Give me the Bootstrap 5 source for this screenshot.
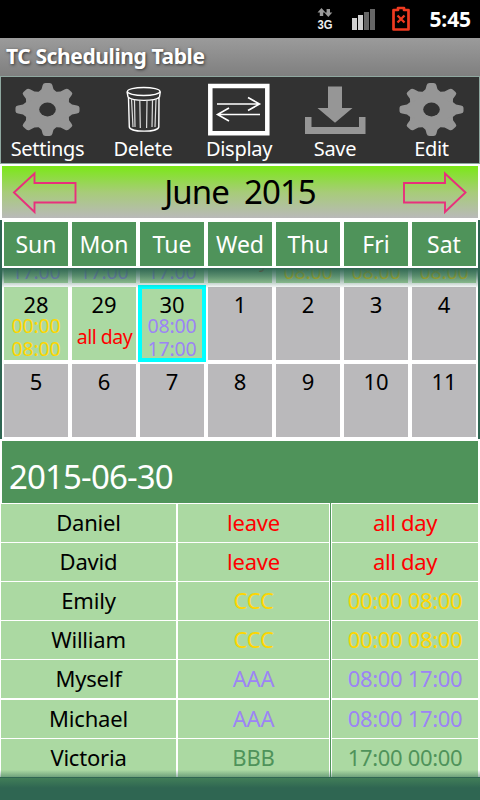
<!DOCTYPE html>
<html lang="en">
<head>
<meta charset="utf-8">
<meta name="viewport" content="width=device-width, initial-scale=1">
<title>TC Scheduling Table</title>
<link href="https://cdn.jsdelivr.net/npm/bootstrap@5.3.0/dist/css/bootstrap.min.css" rel="stylesheet">
<style>
body{width:480px;height:800px;overflow:hidden;background:#2f6652;font-family:"Noto Sans","Open Sans",sans-serif;color:#000}
svg{display:block}
.status{height:38px;background:#000}
.clock{font-size:21px;line-height:38px;font-weight:700;letter-spacing:-.1px;padding-right:9px;width:51px;text-align:right;white-space:nowrap}
.titlebar{height:38px;background:linear-gradient(#9b9b9b,#7f7f7f);font-size:21px;line-height:37px;letter-spacing:-.4px;padding-left:6px;text-shadow:1px 1px 3px #333}
.tools{height:88px;background:#323232;border:1px solid #8fa8a0;display:grid;grid-template-columns:93px 98px 94px 98px 95px}
.tool{font-size:20px;letter-spacing:-.3px;line-height:22px;padding-top:1px}
.month{height:54px;background:#fff;padding:2px 2px 0}
.month-fill{height:52px;background:linear-gradient(#7be817,#a7cc78 50%,#b9b9b9);padding:0 10px}
.month-name{font-size:33px;letter-spacing:-.95px;line-height:52px;white-space:pre}
.cal-top{background:#fff;height:2px}
.cal{margin:0 2px;background:#fff;padding:2px}
.week{display:grid;grid-template-columns:repeat(7,64px);gap:4px}
.dow{height:44px;background:#4f935a;color:#fff;font-size:23px;line-height:45px;text-align:center}
.weeks{height:171px;margin:0 2px;overflow:hidden;background:#fff;padding:0 2px;position:relative}
.weeks .week{margin-bottom:4px}
.shade{position:absolute;left:0;right:0;top:0;height:21px;background:linear-gradient(#2f6652,rgba(47,102,82,.66) 38%,rgba(47,102,82,.28) 72%,rgba(47,102,82,0) 95%)}
.day{height:73px;background:#bab9bb;text-align:center;padding-top:7px;font-size:19.5px;line-height:23px;letter-spacing:-.2px;white-space:nowrap}
.peek{height:15px;padding-top:0;overflow:hidden}
.peek>div{margin-top:-8px}
.peek>.peek-high{margin-top:-20px}
.num{font-size:22px;line-height:20px;letter-spacing:0}
.on{background:#abd9a2}
.whole{line-height:46px;letter-spacing:-.5px;padding-left:1px}
.chosen{outline:4px solid #0ff;outline-offset:-2px;position:relative}
.t-gold{color:#ffd600}.t-red{color:#f00}.t-vio{color:#9c84f5}.t-grn{color:#4f935a}
.date-wrap{background:#fff;padding:2px 2px 0}
.date{height:62px;background:#4f935a;color:#fff;font-size:33px;letter-spacing:-.85px;line-height:72px;padding-left:7px;overflow:hidden}
.roster{background:#fff;padding:1px 2px 0 1px;position:relative}
.entry{display:grid;grid-template-columns:175px 151px 146px;column-gap:2px;height:38px;margin-bottom:1px;font-size:22px;line-height:37px;letter-spacing:-.2px;text-align:center}
.entry>div{background:#abd9a2;height:38px}
.entry>div:nth-child(3){margin-left:1px;width:146px;letter-spacing:-.35px}
.entry:nth-child(5){margin-bottom:2px}
.divider{position:absolute;left:330px;top:0;bottom:0;width:1px;background:#4f935a}
.foot{height:22px;background:linear-gradient(#417e58,#2f6652 10px);position:relative}
.foot::before{content:"";position:absolute;left:0;right:0;top:-8px;height:8px;background:linear-gradient(rgba(47,102,82,0),rgba(47,102,82,.55))}
</style>
<script src="https://cdn.jsdelivr.net/npm/bootstrap@5.3.0/dist/js/bootstrap.bundle.min.js"></script>
</head>
<body>
<header class="status d-flex justify-content-end text-white">
  <svg width="115" height="38" viewBox="314 0 115 38">
    <path d="M321.500 8l4 4.500h-2.300v3.500h-3.400v-3.500h-2.300z M328.300 17l-4-4.500h2.300v-3.500h3.400v3.500h2.300z" fill="#999"/>
    <text x="317.500" y="28.800" font-size="13.500" font-weight="700" fill="#eee" textLength="15" lengthAdjust="spacingAndGlyphs" font-family="Liberation Sans, sans-serif">3G</text>
    <path d="M352 18h5v12h-5zM358 15h5v15h-5z" fill="#d0d0d0"/>
    <path d="M364 12h5v18h-5zM370 9h5v21h-5z" fill="#666"/>
    <path d="M393.500 10h4.500v-2h6v2h4.500v19.500h-15z" fill="none" stroke="#ee3a20" stroke-width="2.700" stroke-linejoin="round"/>
    <path d="M397.500 15.500l7 7m0-7l-7 7" stroke="#ee3a20" stroke-width="2.300"/>
  </svg>
  <div class="clock">5:45</div>
</header>
<div class="titlebar fw-bold text-white">TC Scheduling Table</div>

<nav class="tools text-white text-center">
  <div class="tool"><svg class="mx-auto" width="70" height="60" viewBox="-34.500 -31.500 70 60"><g id="gear" transform="scale(1 .83)" fill="#969696"><circle r="22.500"/><path id="tooth" d="M-11-19L-6-24.500-4.800-29.500Q-4.200-32-2-32H2Q4.200-32 4.800-29.500L6-24.500 11-19z"/><use href="#tooth" transform="rotate(45)"/><use href="#tooth" transform="rotate(90)"/><use href="#tooth" transform="rotate(135)"/><use href="#tooth" transform="rotate(180)"/><use href="#tooth" transform="rotate(225)"/><use href="#tooth" transform="rotate(270)"/><use href="#tooth" transform="rotate(315)"/><circle r="8.300" fill="#323232"/></g></svg>Settings</div>
  <div class="tool"><svg class="mx-auto" width="70" height="60" viewBox="108 78 70 60" fill="none" stroke="#fff" stroke-width="1.400"><ellipse cx="143.700" cy="91.500" rx="16.300" ry="4"/><path d="M127 91.500l1 5.500c5 4.500 27 4.500 31.500 0l.8-5.500M128.500 98l.8 29c1 5.500 28.500 5.500 29.500 0l.2-29"/><path d="M131.500 99l1.500 28M134.500 100l.5 27M139.800 100l.5 28M147 100l-.4 28M152.500 100l-.5 27M156 99l-1 28" stroke="#ddd" stroke-width="1.200"/></svg>Delete</div>
  <div class="tool"><svg class="mx-auto" width="70" height="60" viewBox="204 78 70 60" fill="none" stroke="#fff"><path d="M210.300 86h57v47.300h-57z" stroke-width="4.500"/><path d="M217 104h42M248 97.500l11.500 6.500-11.500 6.500M260 114.500h-42M229 108l-11.500 6.500 11.500 6.500" stroke-width="1.600"/></svg>Display</div>
  <div class="tool"><svg class="mx-auto" width="70" height="60" viewBox="300 78 70 60" fill="#969696"><path d="M328 86.500h14V108h10.500L335 122.700 317.500 108H328zM305 117h6.500v10h47.500v-10h6.500v17H305z"/></svg>Save</div>
  <div class="tool"><svg class="mx-auto" width="70" height="60" viewBox="-34.500 -31.500 70 60"><use href="#gear"/></svg>Edit</div>
</nav>

<div class="month">
  <div class="month-fill d-flex justify-content-between">
    <svg width="66" height="52" viewBox="12 166 66 52"><path id="arrow" d="M14 192.500L34.500 173.500V183H75.500V202.500H34.500V212z" fill="none" stroke="#e8307c" stroke-width="1.900"/></svg>
    <div class="month-name">June  2015</div>
    <svg width="66" height="52" viewBox="402 166 66 52"><use href="#arrow" transform="translate(479.500 0) scale(-1 1)"/></svg>
  </div>
</div>

<main>
  <div class="cal-top"></div>
  <div class="cal"><div class="week"><div class="dow">Sun</div><div class="dow">Mon</div><div class="dow">Tue</div><div class="dow">Wed</div><div class="dow">Thu</div><div class="dow">Fri</div><div class="dow">Sat</div></div></div>
  <div class="weeks">
    <div class="week">
      <div class="day on peek"><div class="t-vio">17:00</div></div>
      <div class="day on peek"><div class="t-vio">17:00</div></div>
      <div class="day on peek"><div class="t-vio">17:00</div></div>
      <div class="day on peek"><div class="peek-high t-red">all day</div></div>
      <div class="day on peek"><div class="t-gold">08:00</div></div>
      <div class="day on peek"><div class="t-gold">08:00</div></div>
      <div class="day on peek"><div class="t-gold">08:00</div></div>
    </div>
    <div class="week">
      <div class="day on"><div class="num">28</div><div class="t-gold">00:00<br>08:00</div></div>
      <div class="day on"><div class="num">29</div><div class="whole t-red">all day</div></div>
      <div class="day on chosen"><div class="num">30</div><div class="t-vio">08:00<br>17:00</div></div>
      <div class="day"><div class="num">1</div></div>
      <div class="day"><div class="num">2</div></div>
      <div class="day"><div class="num">3</div></div>
      <div class="day"><div class="num">4</div></div>
    </div>
    <div class="week">
      <div class="day"><div class="num">5</div></div>
      <div class="day"><div class="num">6</div></div>
      <div class="day"><div class="num">7</div></div>
      <div class="day"><div class="num">8</div></div>
      <div class="day"><div class="num">9</div></div>
      <div class="day"><div class="num">10</div></div>
      <div class="day"><div class="num">11</div></div>
    </div>
    <div class="shade"></div>
  </div>

  <div class="date-wrap"><div class="date">2015-06-30</div></div>
  <div class="roster">
    <div class="entry"><div>Daniel</div><div class="t-red">leave</div><div class="t-red">all day</div></div>
    <div class="entry"><div>David</div><div class="t-red">leave</div><div class="t-red">all day</div></div>
    <div class="entry"><div>Emily</div><div class="t-gold">CCC</div><div class="t-gold">00:00 08:00</div></div>
    <div class="entry"><div>William</div><div class="t-gold">CCC</div><div class="t-gold">00:00 08:00</div></div>
    <div class="entry"><div>Myself</div><div class="t-vio">AAA</div><div class="t-vio">08:00 17:00</div></div>
    <div class="entry"><div>Michael</div><div class="t-vio">AAA</div><div class="t-vio">08:00 17:00</div></div>
    <div class="entry"><div>Victoria</div><div class="t-grn">BBB</div><div class="t-grn">17:00 00:00</div></div>
    <div class="divider"></div>
  </div>
  <div class="foot"></div>
</main>
</body>
</html>
